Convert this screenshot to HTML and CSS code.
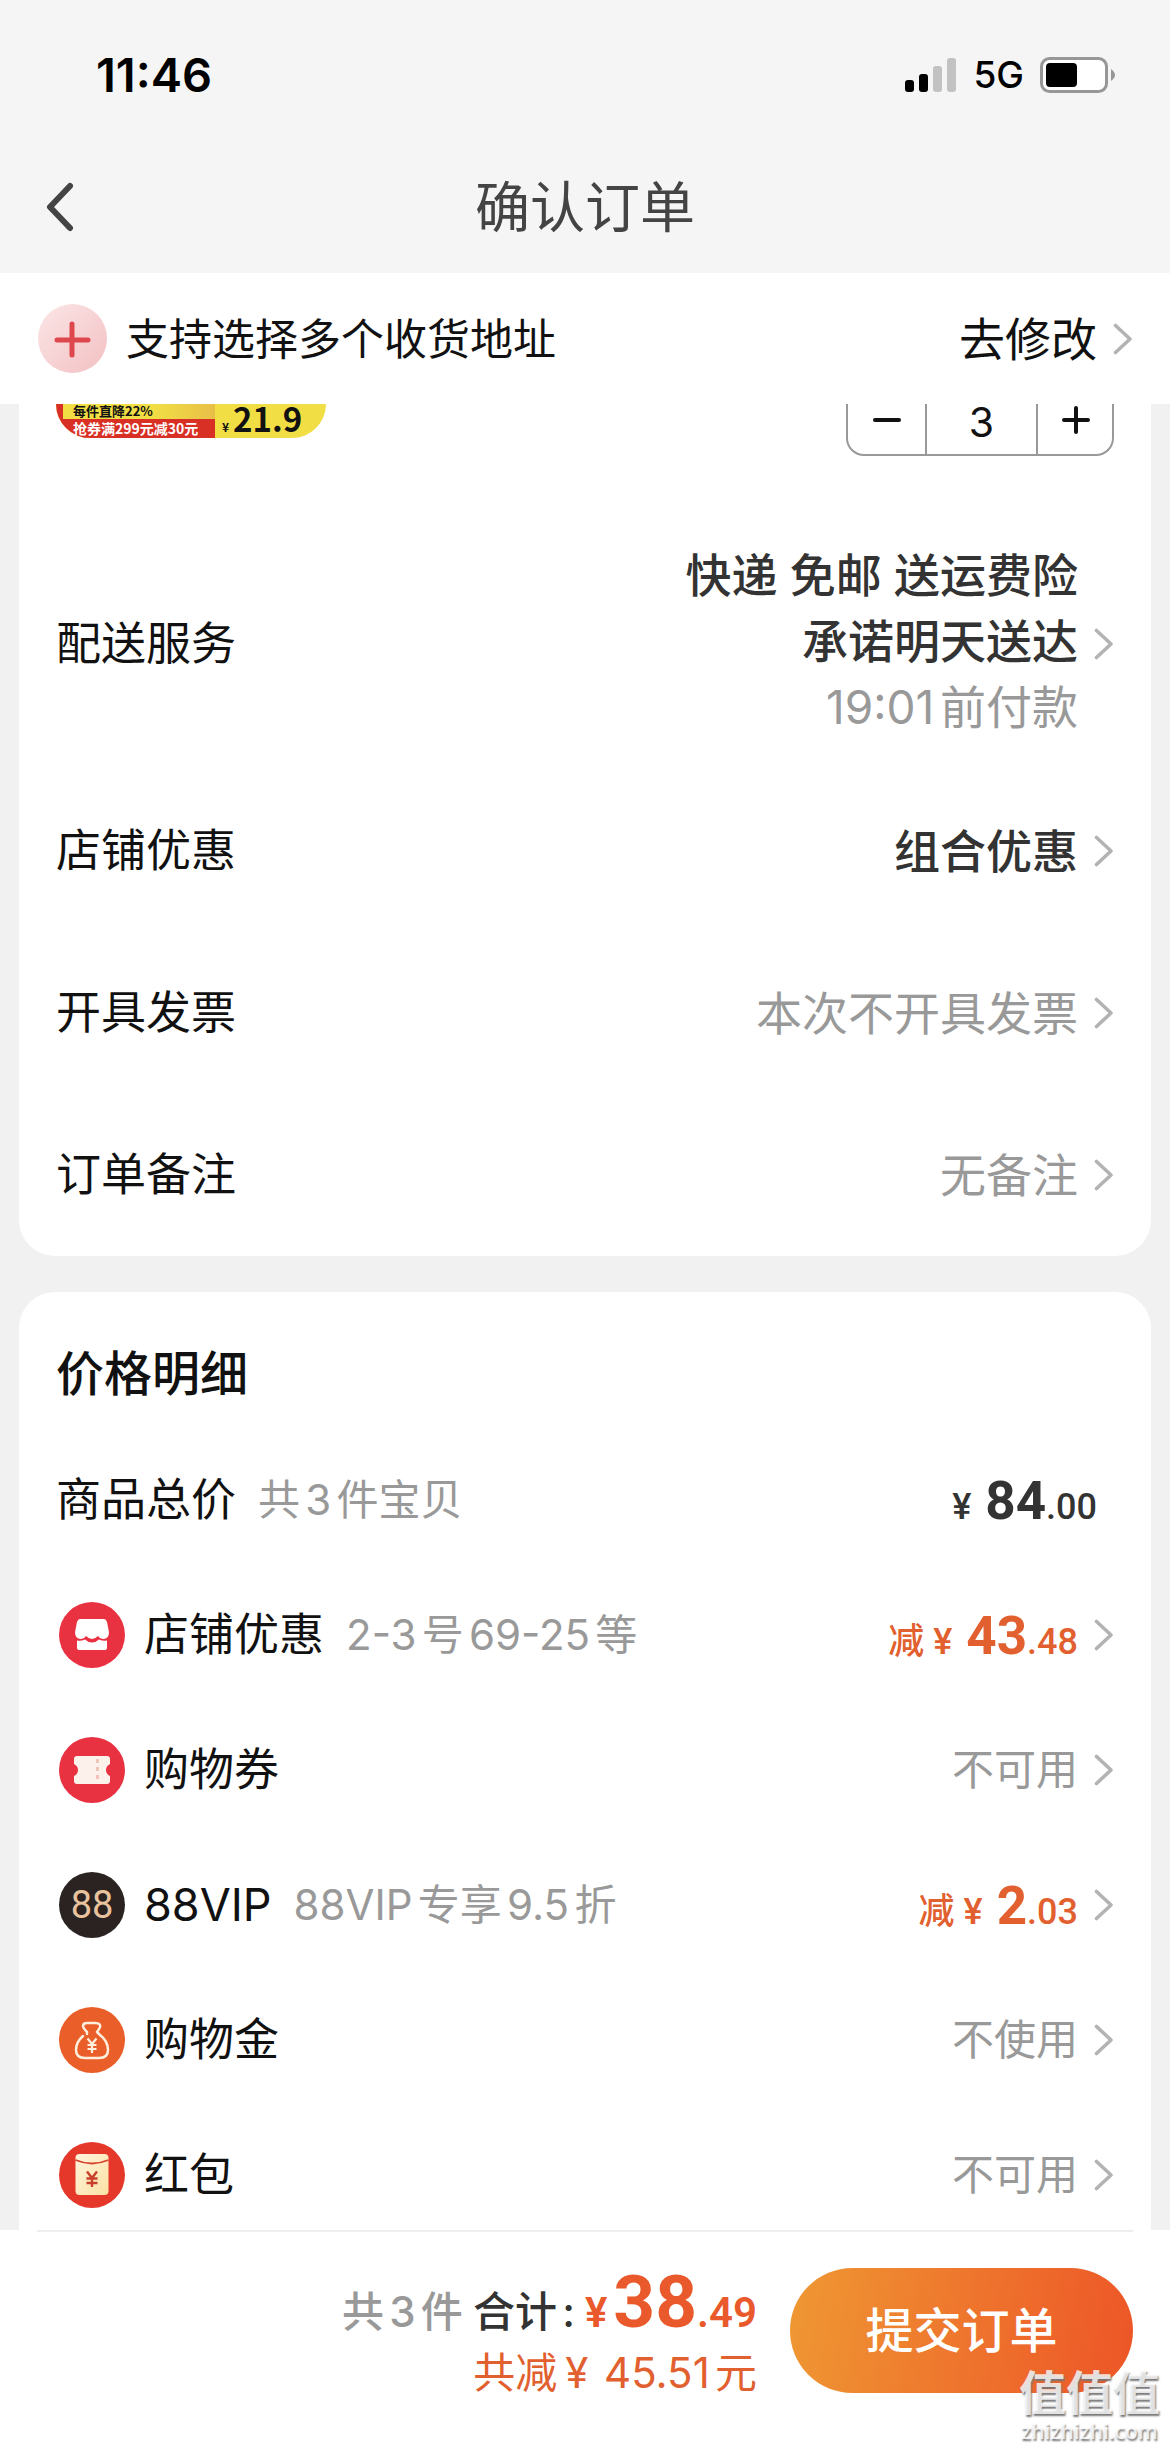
FILE: index.html
```html
<!DOCTYPE html>
<html lang="zh-CN">
<head>
<meta charset="utf-8">
<meta name="viewport" content="width=device-width, initial-scale=1">
<title>确认订单</title>
<link rel="stylesheet" href="styles.css">
</head>
<body>
<svg width="0" height="0" class="defs" aria-hidden="true">
  <symbol id="chevron" viewBox="0 0 20 32"><path d="M2.500 2.500 17 16 2.500 29.500" fill="none" stroke="currentColor" stroke-width="3.600" stroke-linecap="round" stroke-linejoin="round"/></symbol>
</svg>

<header class="top">
  <div class="status">
    <span class="time">11:46</span>
    <span class="status-icons">
      <svg width="52" height="36" viewBox="0 0 52 36" aria-hidden="true">
        <rect x="0" y="23" width="9" height="12" rx="3"/>
        <rect x="14" y="17" width="9" height="18" rx="3"/>
        <rect x="28" y="9" width="9" height="26" rx="3" fill="#c2c2c2"/>
        <rect x="42" y="1" width="9" height="34" rx="3" fill="#c2c2c2"/>
      </svg>
      <span class="network">5G</span>
      <svg width="76" height="36" viewBox="0 0 76 36" aria-hidden="true">
        <rect x="1.500" y="1.500" width="65" height="33" rx="8" fill="#fff" stroke="#979797" stroke-width="3"/>
        <rect x="6" y="6" width="31" height="24" rx="4"/>
        <path d="M71 12q4 3 4 6t-4 6z" fill="#979797"/>
      </svg>
    </span>
  </div>
  <nav class="nav">
    <button class="back" type="button" aria-label="返回">
      <svg width="30" height="50" viewBox="0 0 30 50" aria-hidden="true"><path d="M26 4 6 25l20 21" fill="none" stroke="#444" stroke-width="6" stroke-linecap="round" stroke-linejoin="round"/></svg>
    </button>
    <h1 class="title">确认订单</h1>
  </nav>
</header>

<a class="address" href="#">
  <svg class="plus-badge" width="69" height="69" viewBox="0 0 69 69" aria-hidden="true">
    <defs><linearGradient id="pink" x1="0" y1="0" x2="1" y2="1"><stop offset="0" stop-color="#fbe6e7"/><stop offset="1" stop-color="#f3c0c2"/></linearGradient></defs>
    <circle cx="34.500" cy="34.500" r="34.500" fill="url(#pink)"/>
    <path d="M34 20v31M19 36h31" stroke="#dd474d" stroke-width="5" stroke-linecap="round"/>
  </svg>
  <span class="address-text">支持选择多个收货地址</span>
  <span class="address-edit">去修改</span>
  <svg class="chevron" aria-hidden="true"><use href="#chevron"/></svg>
</a>

<main class="content">
  <section class="card order">
    <div class="product">
      <div class="promo">
        <div class="promo-offers">
          <span class="promo-drop">每件直降22%</span>
          <span class="promo-coupon">抢券满299元减30元</span>
        </div>
        <div class="promo-price"><small>¥</small>21.9</div>
      </div>
      <div class="stepper">
        <button type="button" aria-label="减少"><svg width="32" height="32" viewBox="0 0 32 32" aria-hidden="true"><path d="M4 16h24" stroke="#111" stroke-width="4" stroke-linecap="round"/></svg></button>
        <input type="text" value="3" aria-label="数量">
        <button type="button" aria-label="增加"><svg width="32" height="32" viewBox="0 0 32 32" aria-hidden="true"><path d="M4 16h24M16 4v24" stroke="#111" stroke-width="4" stroke-linecap="round"/></svg></button>
      </div>
    </div>
    <a class="row delivery" href="#">
      <span class="label">配送服务</span>
      <span class="value"><b>快递 免邮 送运费险</b><b>承诺明天送达</b><span>19:01前付款</span></span>
      <svg class="chevron" aria-hidden="true"><use href="#chevron"/></svg>
    </a>
    <a class="row" href="#">
      <span class="label">店铺优惠</span>
      <span class="value"><b>组合优惠</b></span>
      <svg class="chevron" aria-hidden="true"><use href="#chevron"/></svg>
    </a>
    <a class="row" href="#">
      <span class="label">开具发票</span>
      <span class="value">本次不开具发票</span>
      <svg class="chevron" aria-hidden="true"><use href="#chevron"/></svg>
    </a>
    <a class="row" href="#">
      <span class="label">订单备注</span>
      <span class="value">无备注</span>
      <svg class="chevron" aria-hidden="true"><use href="#chevron"/></svg>
    </a>
  </section>

  <section class="card prices">
    <h2 class="card-title">价格明细</h2>
    <div class="row total">
      <span class="label">商品总价</span><span class="note">共3件宝贝</span>
      <span class="amount">¥ <strong>84</strong>.00</span>
    </div>
    <a class="row" href="#">
      <svg class="icon" viewBox="0 0 66 66" aria-hidden="true">
        <circle cx="33" cy="33" r="33" fill="#e93241"/>
        <path d="M21 17h24q2 0 3 3l2 10q0 6-5 7-4 0-6-3-3 3-6 3t-6-3q-2 3-6 3-5-1-5-7l2-10q1-3 3-3z" fill="#fff"/>
        <path d="M18 38.500q4 1 8-1 3 3 7 3t7-3q4 2 8 1V46q0 2-2 2H20q-2 0-2-2z" fill="#fff"/>
      </svg>
      <span class="label">店铺优惠</span><span class="note">2-3号69-25等</span>
      <span class="amount off">减 ¥ <strong>43</strong>.48</span>
      <svg class="chevron" aria-hidden="true"><use href="#chevron"/></svg>
    </a>
    <a class="row" href="#">
      <svg class="icon" viewBox="0 0 66 66" aria-hidden="true">
        <circle cx="33" cy="33" r="33" fill="#e93241"/>
        <path d="M18 19h30q3 0 3 3v5q-4 2-4 6t4 6v5q0 3-3 3H18q-3 0-3-3v-5q4-2 4-6t-4-6v-5q0-3 3-3z" fill="#fdf1ec"/>
        <path d="M38.500 22v24" stroke="#f2c3b8" stroke-width="3" stroke-dasharray="4 4"/>
      </svg>
      <span class="label">购物券</span>
      <span class="value">不可用</span>
      <svg class="chevron" aria-hidden="true"><use href="#chevron"/></svg>
    </a>
    <a class="row" href="#">
      <span class="icon vip" aria-hidden="true">88</span>
      <span class="label">88VIP</span><span class="note">88VIP专享9.5折</span>
      <span class="amount off">减 ¥ <strong>2</strong>.03</span>
      <svg class="chevron" aria-hidden="true"><use href="#chevron"/></svg>
    </a>
    <a class="row" href="#">
      <svg class="icon" viewBox="0 0 66 66" aria-hidden="true">
        <circle cx="33" cy="33" r="33" fill="#ea5f29"/>
        <path d="M24 29q-7 6-7 14 0 8 9 8h14q9 0 9-8 0-9-8-15l-3-3q4-5 3-7-1-2-5-2h-8q-4 0-4 3 0 2 4 6v2" fill="none" stroke="#fdeedd" stroke-width="2.500" stroke-linecap="round" stroke-linejoin="round"/>
        <path d="M28.500 31.500 33 37l4.500-5.500M33 37v9M28.500 38h9M28.500 42h9" fill="none" stroke="#fdeedd" stroke-width="2.200"/>
      </svg>
      <span class="label">购物金</span>
      <span class="value">不使用</span>
      <svg class="chevron" aria-hidden="true"><use href="#chevron"/></svg>
    </a>
    <a class="row" href="#">
      <svg class="icon" viewBox="0 0 66 66" aria-hidden="true">
        <defs><linearGradient id="cream" x1="0" y1="0" x2="1" y2="1"><stop offset="0" stop-color="#fff4dc"/><stop offset="1" stop-color="#fbe1a4"/></linearGradient></defs>
        <circle cx="33" cy="33" r="33" fill="#e5382b"/>
        <rect x="16.500" y="12" width="33" height="41" rx="4" fill="url(#cream)"/>
        <path d="M16.500 18q16.500 7 33 0" fill="none" stroke="#d9432f" stroke-width="1.800"/>
        <path d="M28 29.500 33 36l5-6.500M33 36v9M27.500 36.500h11M27.500 41h11" fill="none" stroke="#c8402b" stroke-width="2.400"/>
      </svg>
      <span class="label">红包</span>
      <span class="value">不可用</span>
      <svg class="chevron" aria-hidden="true"><use href="#chevron"/></svg>
    </a>
  </section>
</main>

<footer class="bar">
  <div class="summary">
    <p class="sum-line"><span class="count">共3件</span><span class="sum-label">合计:</span><span class="sum">¥<strong>38</strong>.49</span></p>
    <p class="saved">共减<span class="yen">¥</span> 45.51元</p>
  </div>
  <button class="submit" type="button">提交订单</button>
  <div class="watermark"><span>值值值</span><small>zhizhizhi.com</small></div>
</footer>
</body>
</html>
```
FILE: styles.css
```css
* { box-sizing: border-box; }

body {
  margin: 0;
  height: 100vh;
  display: flex;
  flex-direction: column;
  background: #f1f1f1;
  color: #111;
  font-family: Inter, "Noto Sans CJK SC", sans-serif;
  font-size: 46px;
  line-height: 66px;
  text-autospace: normal;
}

a { color: inherit; text-decoration: none; }
h1, h2, p { margin: 0; }
button, input { font: inherit; color: inherit; border: 0; padding: 0; background: none; }
.defs { position: absolute; }

/* Status bar and title */
.top { flex: none; background: #f5f5f5; }
.status {
  display: flex;
  align-items: center;
  justify-content: space-between;
  height: 141px;
  padding: 8px 54px 0 96px;
  color: #000;
}
.time { font-size: 47px; font-weight: 600; }
.status-icons { display: flex; align-items: center; gap: 16px; }
.network { font-size: 37px; font-weight: 500; }
.nav {
  display: grid;
  grid-template-columns: 1fr auto 1fr;
  align-items: center;
  height: 132px;
  padding: 0 44px;
}
.back { display: flex; justify-self: start; }
.title { font-size: 55px; font-weight: 400; color: #444; }

/* Address strip */
.address {
  flex: none;
  display: flex;
  align-items: center;
  height: 131px;
  padding: 0 37px 0 38px;
  background: #fff;
}
.address-text { margin-left: 19px; font-size: 43px; }
.address-edit { margin-left: auto; }
.chevron { flex: none; width: 20px; height: 32px; margin-left: 16px; color: #b3b3b3; }

/* Scrolling content */
.content { flex: 1; min-height: 0; overflow: hidden; padding: 0 19px; }
.card { background: #fff; padding: 0 37px; }
.order { border-radius: 0 0 36px 36px; margin-bottom: 36px; }
.prices { border-radius: 36px 36px 0 0; }

.product {
  display: flex;
  align-items: flex-start;
  justify-content: space-between;
  height: 114px;
}
.promo {
  display: flex;
  width: 270px;
  height: 34px;
  border-radius: 0 0 34px 34px;
  background: #f1de45;
  font-family: "Noto Sans CJK SC", sans-serif;
  font-weight: 700;
  color: #111;
  text-autospace: no-autospace;
}
.promo-offers {
  width: 159px;
  border-left: 7px solid #d93025;
  border-radius: 0 0 0 34px;
  background: #d93025;
}
.promo-offers span { display: block; white-space: nowrap; padding-left: 10px; }
.promo-drop { height: 15px; background: linear-gradient(90deg, #f1de45 60%, #e8bf47); font-size: 13px; line-height: 13px; }
.promo-coupon { height: 19px; color: #fff; font-size: 14px; line-height: 19px; }
.promo-price { display: flex; align-items: baseline; gap: 4px; padding-left: 7px; font-size: 33px; line-height: 28px; }
.promo-price small { font-size: 12px; }

.stepper {
  display: grid;
  grid-template-columns: 77px 113px 76px;
  width: 268px;
  height: 52px;
  overflow: hidden;
  border: 2px solid #999;
  border-top: 0;
  border-radius: 0 0 18px 18px;
}
.stepper button { display: flex; justify-content: center; }
.stepper input {
  min-width: 0;
  height: 50px;
  padding-bottom: 14px;
  border: solid #999;
  border-width: 0 2px;
  text-align: center;
  font-size: 41px;
  line-height: 36px;
}

.row { display: flex; align-items: center; height: 162px; }
.delivery { height: 252px; }
.label { flex: none; font-size: 45px; }
.value { margin-left: auto; color: #999; text-align: right; }
.value b, .delivery .value span { display: block; }
.value b { font-weight: 500; color: #333; }
.delivery .value { padding-bottom: 6px; }

/* Price details */
.prices .row { height: 135px; }
.card-title { padding: 49px 0 25px; font-size: 48px; font-weight: 500; }
.prices .value, .note { font-size: 42px; }
.note { margin-left: 22px; color: #999; }
.icon { flex: none; width: 66px; height: 66px; margin: 0 19px 0 3px; }
.vip {
  border-radius: 50%;
  background: #2b2321;
  color: #e9c39d;
  font-family: "Liberation Sans Narrow", Roboto, sans-serif;
  font-size: 38px;
  line-height: 66px;
  text-align: center;
}
.amount {
  margin-left: auto;
  padding-top: 8px;
  font-family: Roboto, "Noto Sans CJK SC", sans-serif;
  font-size: 36px;
  font-weight: 500;
  color: #333;
  text-autospace: no-autospace;
}
.amount strong { margin-left: 5px; font-size: 53px; font-weight: 700; }
.total .amount { padding-right: 17px; }
.off { color: #e25f2f; }

/* Checkout bar */
.bar {
  flex: none;
  position: relative;
  display: flex;
  justify-content: flex-end;
  align-items: flex-start;
  gap: 33px;
  height: 218px;
  padding: 0 37px;
  background: #fff;
}
.bar::before { content: ""; position: absolute; top: 0; left: 37px; right: 37px; height: 2px; background: #eee; }
.summary { padding-top: 36px; text-align: right; font-size: 42px; }
.sum-line { display: flex; align-items: baseline; justify-content: flex-end; height: 72px; line-height: 72px; font-weight: 500; }
.count { color: #999; }
.sum-label { margin-left: 10px; color: #333; }
.sum { margin-left: 10px; font-family: Roboto, sans-serif; font-weight: 600; color: #e9592b; }
.sum strong { margin-left: 6px; font-size: 73px; font-weight: 700; }
.saved { color: #e25f2f; line-height: 70px; }
.yen { padding: 0 4px 0 8px; }
.submit {
  width: 343px;
  height: 125px;
  margin-top: 38px;
  border-radius: 63px;
  background: linear-gradient(100deg, #ef9833, #ee6f2c 60%, #ed5527);
  color: #fff;
  font-size: 48px;
  font-weight: 500;
}
.watermark {
  position: absolute;
  right: 10px;
  bottom: 4px;
  display: flex;
  flex-direction: column;
  align-items: center;
  color: rgba(255, 255, 255, 0.8);
  text-shadow: 1px 2px 2px #777;
  font-size: 47px;
  font-weight: 700;
  line-height: 50px;
}
.watermark small { font-family: "Open Sans", sans-serif; font-size: 21px; font-weight: 600; line-height: 26px; }
```
